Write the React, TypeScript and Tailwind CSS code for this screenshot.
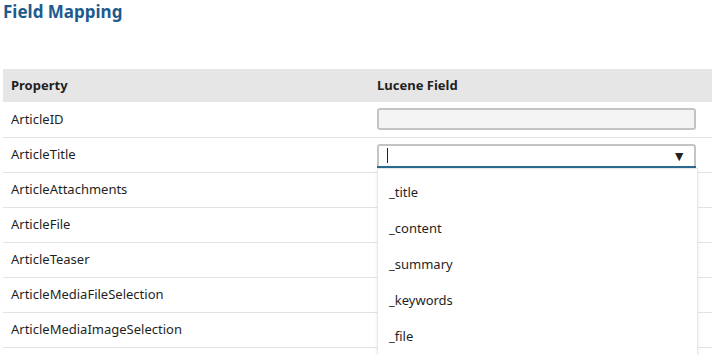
const rows = [
  'ArticleID',
  'ArticleTitle',
  'ArticleAttachments',
  'ArticleFile',
  'ArticleTeaser',
  'ArticleMediaFileSelection',
  'ArticleMediaImageSelection',
];

const options = ['_title', '_content', '_summary', '_keywords', '_file'];

export default function App() {
  return (
    <div className="relative h-[355px] w-[712px] overflow-hidden bg-white pl-[3px] font-['Noto_Sans',sans-serif] text-[13px] text-[#1f1f1f]">
      <h1 className="pt-[1px] text-[17px] font-bold leading-[22px] text-[#1e5b8c]">Field Mapping</h1>

      <table className="mt-[46px] w-full border-collapse">
        <thead>
          <tr className="h-[33px] bg-[#e6e6e6] text-left">
            <th className="w-[366px] pl-[8px] font-bold">Property</th>
            <th className="pl-[8px] font-bold">Lucene Field</th>
          </tr>
        </thead>
        <tbody>
          {rows.map((name, i) => (
            <tr key={name} className="h-[35px] border-b border-[#e3e3e3]">
              <td className="pl-[8px]">{name}</td>
              <td className="pl-[8px] pr-[16px]">
                {i === 0 && (
                  <div className="h-[22px] rounded-[3px] border-2 border-[#c4c4c4] bg-[#f4f4f4]" />
                )}
                {i === 1 && (
                  <div className="relative flex h-[22px] items-center rounded-t-[3px] border-2 border-b-0 border-[#c4c4c4] bg-white">
                    <span className="ml-[8px] h-[15px] w-px bg-[#222]" />
                    <span className="absolute right-[8px] top-[3px] text-[14px] leading-none text-[#222]">▼</span>
                    <span className="absolute -left-[2px] -right-[2px] -bottom-[2px] h-[2px] bg-[#2a6a8f]" />
                  </div>
                )}
              </td>
            </tr>
          ))}
        </tbody>
      </table>

      <ul className="absolute left-[377px] top-[168px] w-[321px] border border-[#e8e8e8] bg-white py-[5px] shadow-[0_2px_4px_rgba(0,0,0,0.08)]">
        {options.map((o) => (
          <li key={o} className="h-[36px] pl-[11px] leading-[36px]">
            {o}
          </li>
        ))}
      </ul>
    </div>
  );
}
